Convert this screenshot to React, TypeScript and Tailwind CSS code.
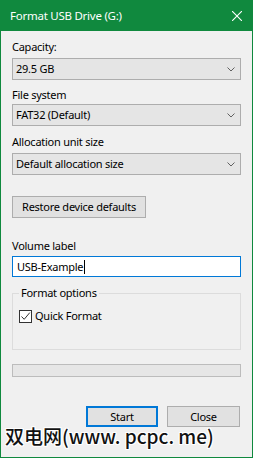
import React from "react";

const font = { fontFamily: '"Noto Sans", "Open Sans", sans-serif', letterSpacing: "-0.25px" };

const Chevron: React.FC = () => (
    <svg width="8" height="5" viewBox="0 0 8 5" className="shrink-0">
        <path d="M0.5 0.5 L4 4 L7.5 0.5" fill="none" stroke="#606060" strokeWidth="1" />
    </svg>
);

const Combo: React.FC<{ value: string; className?: string }> = ({ value, className }) => (
    <div
        className={
            "flex h-[22px] items-center justify-between border border-[#adadad] bg-[#e5e5e5] pl-[3px] pr-[5px] " +
            (className ?? "")
        }
    >
        <span className="text-[11px] leading-[16px] text-black">{value}</span>
        <Chevron />
    </div>
);

const Label: React.FC<{ text: string; className?: string }> = ({ text, className }) => (
    <div className={"h-[16px] text-[11px] leading-[16px] text-black " + (className ?? "")}>{text}</div>
);

const App: React.FC = () => {
    return (
        <div className="relative h-[458px] w-[253px] overflow-hidden bg-[#f0f0f0]" style={font}>
            {/* Title bar */}
            <div className="flex h-[31px] items-center justify-between bg-[#10893e] pl-[10px] pr-[11px]">
                <span className="text-[11.5px] leading-[16px] text-white">Format USB Drive (G:)</span>
                <svg width="10" height="10" viewBox="0 0 10 10">
                    <path d="M0 0 L10 10 M10 0 L0 10" stroke="#ffffff" strokeWidth="1.1" />
                </svg>
            </div>

            {/* Body */}
            <div className="flex h-[427px] flex-col border-x border-b border-[#10893e] px-[11px]">
                <Label text="Capacity:" className="mt-[8px]" />
                <Combo value="29.5 GB" className="mt-[3px]" />

                <Label text="File system" className="mt-[7px]" />
                <Combo value="FAT32 (Default)" className="mt-[1px]" />

                <Label text="Allocation unit size" className="mt-[8px]" />
                <Combo value="Default allocation size" className="mt-[3px]" />

                <button className="mt-[21px] flex h-[22px] w-[134px] items-center justify-center border border-[#adadad] bg-[#e1e1e1] text-[11px] leading-[16px] text-black">
                    Restore device defaults
                </button>

                <Label text="Volume label" className="mt-[20px]" />
                <div className="mt-[2px] flex h-[21px] items-center border border-[#0078d7] bg-white pl-[4px] text-[11px] leading-[16px] text-black">
                    USB-Example
                    <span className="ml-[1px] inline-block h-[14px] w-px bg-black" />
                </div>

                {/* Format options group */}
                <div className="relative mt-[16px] h-[57px] border border-[#dcdcdc]">
                    <span className="absolute -top-[9px] left-[6px] bg-[#f0f0f0] px-[2px] text-[11px] leading-[16px] text-black">
                        Format options
                    </span>
                    <div className="ml-[6px] mt-[14px] flex items-center">
                        <div className="flex h-[13px] w-[13px] items-center justify-center border border-[#333333] bg-white">
                            <svg width="11" height="11" viewBox="0 0 11 11">
                                <path d="M1.5 5.5 L4.2 8.3 L9.8 1.6" fill="none" stroke="#333333" strokeWidth="1" />
                            </svg>
                        </div>
                        <span className="ml-[3px] text-[11px] leading-[16px] text-black">Quick Format</span>
                    </div>
                </div>

                {/* Progress bar */}
                <div className="mt-[14px] h-[13px] border border-[#bcbcbc] bg-[#e6e6e6]" />

                {/* Buttons */}
                <div className="mt-[29px] flex justify-end gap-[9px] pr-[1px]">
                    <button className="flex h-[21px] w-[72px] items-center justify-center border-2 border-[#0078d7] bg-[#e1e1e1] text-[11px] leading-[16px] text-black">
                        Start
                    </button>
                    <button className="flex h-[21px] w-[73px] items-center justify-center border border-[#adadad] bg-[#e1e1e1] text-[11px] leading-[16px] text-black">
                        Close
                    </button>
                </div>
            </div>

            {/* Watermark overlay */}
            <div
                className="absolute left-[5px] top-[426px] whitespace-nowrap text-[19px] font-medium leading-[19px] text-[#111111]"
                style={{
                    fontFamily: '"Noto Sans CJK SC", sans-serif',
                    letterSpacing: "0px",
                    textShadow:
                        "1px 0 0 #fff, -1px 0 0 #fff, 0 1px 0 #fff, 0 -1px 0 #fff, 1px 1px 0 #fff, -1px -1px 0 #fff, 1px -1px 0 #fff, -1px 1px 0 #fff",
                }}
            >
                双电网(www. pcpc. me)
            </div>
        </div>
    );
};

export default App;
